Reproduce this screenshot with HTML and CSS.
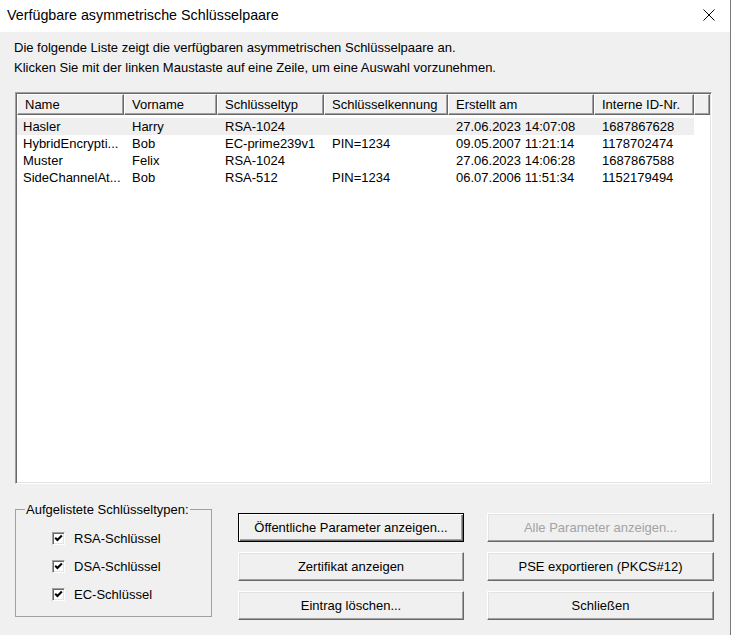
FILE: index.html
```html
<!DOCTYPE html>
<html lang="de">
<head>
<meta charset="utf-8">
<title>Verfügbare asymmetrische Schlüsselpaare</title>
<link rel="stylesheet" href="styles.css">
</head>
<body>
<div class="window">
  <div class="titlebar">
    <span class="title">Verfügbare asymmetrische Schlüsselpaare</span>
    <span class="close"><svg width="12" height="12" viewBox="0 0 12 12"><path d="M0.5 0.5 L11.5 11.5 M11.5 0.5 L0.5 11.5" stroke="#000" stroke-width="1" fill="none"/></svg></span>
  </div>
  <div class="content">
    <p class="intro">Die folgende Liste zeigt die verfügbaren asymmetrischen Schlüsselpaare an.<br>Klicken Sie mit der linken Maustaste auf eine Zeile, um eine Auswahl vorzunehmen.</p>
    <div class="listview">
      <div class="lv-header">
        <div class="hc">Name</div>
        <div class="hc">Vorname</div>
        <div class="hc">Schlüsseltyp</div>
        <div class="hc">Schlüsselkennung</div>
        <div class="hc">Erstellt am</div>
        <div class="hc">Interne ID-Nr.</div>
        <div class="hc"></div>
      </div>
      <div class="lv-rows">
        <div class="lv-row hot"><span>Hasler</span><span>Harry</span><span>RSA-1024</span><span></span><span>27.06.2023 14:07:08</span><span>1687867628</span></div>
        <div class="lv-row"><span>HybridEncrypti...</span><span>Bob</span><span>EC-prime239v1</span><span>PIN=1234</span><span>09.05.2007 11:21:14</span><span>1178702474</span></div>
        <div class="lv-row"><span>Muster</span><span>Felix</span><span>RSA-1024</span><span></span><span>27.06.2023 14:06:28</span><span>1687867588</span></div>
        <div class="lv-row"><span>SideChannelAt...</span><span>Bob</span><span>RSA-512</span><span>PIN=1234</span><span>06.07.2006 11:51:34</span><span>1152179494</span></div>
      </div>
    </div>
    <div class="bottom">
      <fieldset class="group">
        <legend>Aufgelistete Schlüsseltypen:</legend>
        <div class="checks">
          <div class="check"><span class="box"><svg width="9" height="9" viewBox="0 0 9 9"><path d="M1.2 3.8 L3.4 6 L7.9 1.5" stroke="#000" stroke-width="2" fill="none"/></svg></span>RSA-Schlüssel</div>
          <div class="check"><span class="box"><svg width="9" height="9" viewBox="0 0 9 9"><path d="M1.2 3.8 L3.4 6 L7.9 1.5" stroke="#000" stroke-width="2" fill="none"/></svg></span>DSA-Schlüssel</div>
          <div class="check"><span class="box"><svg width="9" height="9" viewBox="0 0 9 9"><path d="M1.2 3.8 L3.4 6 L7.9 1.5" stroke="#000" stroke-width="2" fill="none"/></svg></span>EC-Schlüssel</div>
        </div>
      </fieldset>
      <div class="buttons">
        <button class="btn default">Öffentliche Parameter anzeigen...</button>
        <button class="btn" disabled>Alle Parameter anzeigen...</button>
        <button class="btn">Zertifikat anzeigen</button>
        <button class="btn">PSE exportieren (PKCS#12)</button>
        <button class="btn">Eintrag löschen...</button>
        <button class="btn">Schließen</button>
      </div>
    </div>
  </div>
</div>
</body>
</html>
```

FILE: styles.css
```css
* { box-sizing: border-box; }
html, body { margin: 0; padding: 0; }
body {
  width: 731px;
  height: 635px;
  overflow: hidden;
  font-family: "Liberation Sans", Arial, sans-serif;
  font-size: 13px;
  color: #000;
  background: #f0f0f0;
}
.window {
  width: 731px;
  height: 635px;
  background: #f0f0f0;
  border-right: 1px solid #7a7a7a;
}
.titlebar {
  height: 32px;
  background: #fff;
  display: flex;
  align-items: center;
  padding: 0 0 3px 7px;
}
.title {
  font-size: 14.3px;
  line-height: 18px;
}
.close {
  margin-left: auto;
  margin-right: 15px;
  width: 12px;
  height: 12px;
  display: flex;
}
.intro {
  margin: 6px 0 0 14px;
  line-height: 20px;
}
.listview {
  margin: 14px 0 0 15px;
  width: 697px;
  height: 392px;
  background: #fff;
  border: 1px solid;
  border-color: #a0a0a0 #fff #fff #a0a0a0;
  padding: 1px;
  box-shadow: inset 1px 1px 0 #696969, inset -1px -1px 0 #e3e3e3;
}
.lv-header {
  display: grid;
  grid-template-columns: 107px 93px 107px 124px 146px 100px 1fr;
  height: 21px;
  background: #f0f0f0;
}
.hc {
  border: 1px solid;
  border-color: #fff #696969 #696969 #fff;
  box-shadow: inset -1px -1px 0 #a0a0a0;
  padding-left: 7px;
  line-height: 19px;
  white-space: nowrap;
  overflow: hidden;
}
.lv-rows { padding-top: 3px; }
.lv-row {
  display: grid;
  grid-template-columns: 107px 93px 107px 124px 146px 100px;
  width: 677px;
  height: 17px;
  line-height: 17px;
}
.lv-row span {
  padding-left: 8px;
  white-space: nowrap;
  overflow: hidden;
}
.lv-row span:first-child { padding-left: 6px; }
.lv-row.hot { background: #efefef; }
.bottom {
  display: flex;
  align-items: flex-start;
  margin: 18px 0 0 15px;
}
.group {
  margin: 0;
  padding: 0;
  border: 1px solid #a0a0a0;
  width: 197px;
  min-width: 0;
}
.group legend {
  margin-left: 9px;
  padding: 0 1px;
  line-height: 15px;
}
.checks { padding: 7px 0 8px 36px; }
.check {
  display: flex;
  align-items: center;
  height: 28px;
}
.box {
  width: 13px;
  height: 13px;
  border: 1px solid;
  border-color: #a0a0a0 #fff #fff #a0a0a0;
  background: #fff;
  box-shadow: inset 1px 1px 0 #696969, inset -1px -1px 0 #e3e3e3;
  margin-right: 9px;
  display: flex;
  align-items: center;
  justify-content: center;
}
.buttons {
  display: grid;
  grid-template-columns: 226px 227px;
  grid-auto-rows: 29px;
  column-gap: 23px;
  row-gap: 10px;
  margin: 11px 0 0 26px;
}
.btn {
  font-family: inherit;
  font-size: 13px;
  color: #000;
  background: #f0f0f0;
  border: 1px solid;
  border-color: #fff #696969 #696969 #fff;
  box-shadow: inset -1px -1px 0 #a0a0a0, inset 1px 1px 0 #e3e3e3;
  padding: 0;
  margin: 0;
}
.btn.default {
  border-color: #000;
  box-shadow: inset 1px 1px 0 #fff, inset -1px -1px 0 #696969, inset -2px -2px 0 #a0a0a0;
}
.btn:disabled { color: #a3a3a3; }
```
